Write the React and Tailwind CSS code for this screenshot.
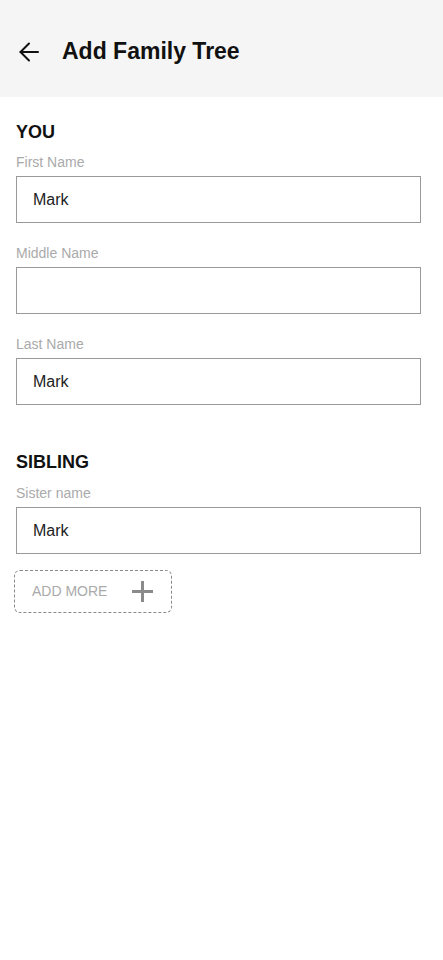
function Field({ label, value }) {
  return (
    <div>
      <div className="text-[14px] leading-[14px] text-[#aaaaaa]">{label}</div>
      <div className="mt-[7px] flex h-[47px] items-center border border-[#9a9a9a] px-[16px] text-[16px] text-[#222]">
        {value}
      </div>
    </div>
  );
}

export default function App() {
  return (
    <div className="min-h-[960px] bg-white font-[family-name:'Liberation_Sans',Arial,sans-serif]">
      <header className="flex h-[97px] items-center bg-[#f5f5f5] pl-[19px] pt-[6px]">
        <svg width="20" height="20" viewBox="0 0 20 20" fill="none" stroke="#111" strokeWidth="2" strokeLinecap="round" strokeLinejoin="round">
          <path d="M19 10H1.5" />
          <path d="M10 1.5L1.5 10L10 18.5" />
        </svg>
        <h1 className="ml-[23px] text-[23px] font-bold leading-[23px] text-[#111]">Add Family Tree</h1>
      </header>

      <main className="px-[16px] pr-[22px]">
        <h2 className="mt-[26px] text-[18px] font-bold leading-[18px] text-[#111]">YOU</h2>
        <div className="mt-[14px] flex flex-col gap-[23px]">
          <Field label="First Name" value="Mark" />
          <Field label="Middle Name" value="" />
          <Field label="Last Name" value="Mark" />
        </div>

        <h2 className="mt-[48px] text-[18px] font-bold leading-[18px] text-[#111]">SIBLING</h2>
        <div className="mt-[15px]">
          <Field label="Sister name" value="Mark" />
        </div>

        <button className="-ml-[2px] mt-[16px] flex h-[43px] w-[158px] items-center rounded-[6px] border border-dashed border-[#8a8a8a] pl-[17px] text-[14px] text-[#aaaaaa]">
          ADD MORE
          <svg className="ml-[25px]" width="21" height="21" viewBox="0 0 21 21">
            <path d="M10.5 0v21M0 10.5h21" stroke="#8a8a8a" strokeWidth="3" />
          </svg>
        </button>
      </main>
    </div>
  );
}
